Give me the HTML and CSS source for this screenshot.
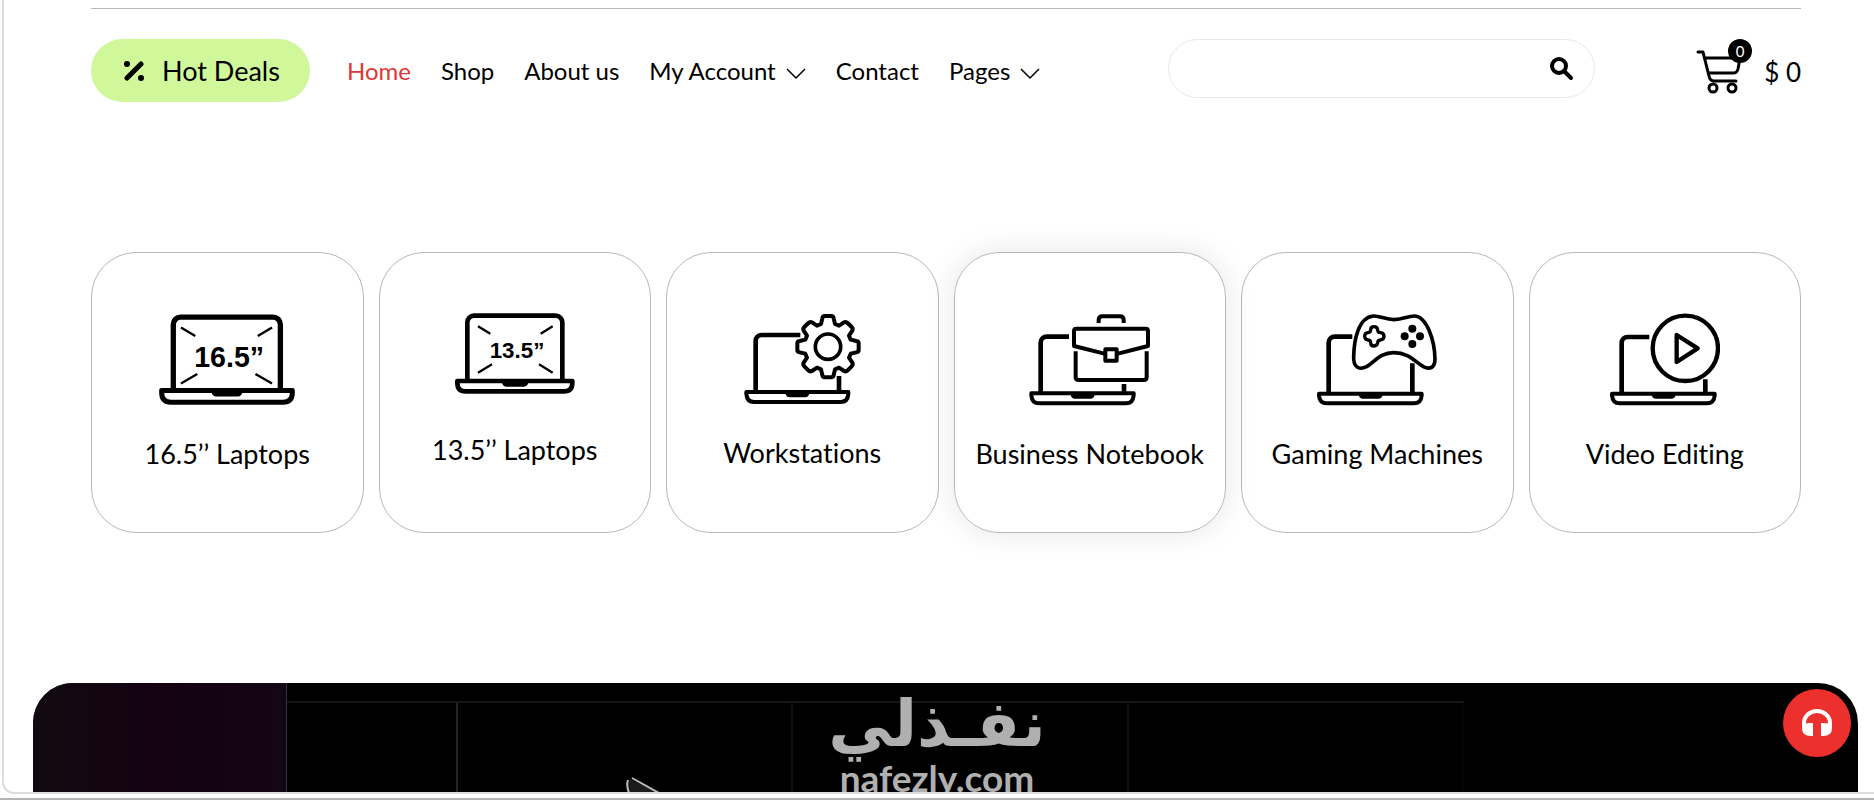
FILE: index.html
```html
<!DOCTYPE html>
<html lang="en">
  <head>
    <meta charset="UTF-8" />
    <meta name="viewport" content="width=device-width, initial-scale=1.0" />
    <title>Laptop Store</title>
    <link rel="stylesheet" href="styles.css">
  </head>
  <body>
    <div class="frame">
      <header class="header">
        <a class="hot_deals" href="#">
          <svg width="20" height="20" viewBox="0 0 20 20">
            <path d="M3 17L17 3" stroke="currentColor" stroke-width="5" stroke-linecap="round" />
            <circle cx="3" cy="3" r="3" />
            <circle cx="17" cy="17" r="3" />
          </svg>
          Hot Deals
        </a>
        <nav>
          <ul class="menu">
            <li><a class="active" href="#">Home</a></li>
            <li><a href="#">Shop</a></li>
            <li><a href="#">About us</a></li>
            <li>
              <a href="#">My Account
                <svg width="20" height="12" viewBox="0 0 20 12"><path class="chevron" d="M1 1L10 10L19 1" /></svg>
              </a>
            </li>
            <li><a href="#">Contact</a></li>
            <li>
              <a href="#">Pages
                <svg width="20" height="12" viewBox="0 0 20 12"><path class="chevron" d="M1 1L10 10L19 1" /></svg>
              </a>
            </li>
          </ul>
        </nav>
        <form class="search">
          <input type="search" name="q" aria-label="Search" />
          <button type="submit" aria-label="Search">
            <svg width="26" height="26" viewBox="0 0 26 26">
              <circle cx="10" cy="10" r="7" fill="none" stroke="currentColor" stroke-width="4" />
              <path d="M15 15L22 22" stroke="currentColor" stroke-width="4" stroke-linecap="round" />
            </svg>
          </button>
        </form>
        <a class="cart" href="#">
          <span class="cart_icon">
            <svg width="46" height="46" viewBox="0 0 46 46">
              <g fill="none" stroke="currentColor" stroke-width="3" stroke-linecap="round" stroke-linejoin="round">
                <path d="M2 3H7L13 27Q14 32 18 32H40" />
                <path d="M9 9H44L42 20Q41 24 38 24H13" />
                <circle cx="17" cy="39" r="4" />
                <circle cx="36" cy="39" r="4" />
              </g>
            </svg>
            <span class="badge">0</span>
          </span>
          <span>$ 0</span>
        </a>
      </header>

      <main>
        <section class="categories">
          <a class="card" href="#">
            <svg width="136" height="95" viewBox="237 219 409 285">
              <path class="line" stroke-width="16" d="M280 450V253a22 22 0 0 1 22-22H580a22 22 0 0 1 22 22V450" />
              <path class="line" stroke-width="15" d="M245 452H638V458Q638 487 610 487H273Q245 487 245 458Z" />
              <path d="M395 455H488Q486 470 474 470H409Q397 470 395 455Z" />
              <path class="line" stroke-width="7" d="M303 262L346 288M577 262L534 288M303 431L352 402M577 431L527 402" />
              <text x="448" y="381" font-size="86">16.5”</text>
            </svg>
            16.5’’ Laptops
          </a>
          <a class="card" href="#">
            <svg width="120" height="91" viewBox="254 219 360 273">
              <path class="line" stroke-width="14" d="M291 420V247a20 20 0 0 1 20-20H556a20 20 0 0 1 20 20V420" />
              <path class="line" stroke-width="14" d="M261 423H606V428Q606 454 581 454H286Q261 454 261 428Z" />
              <path d="M395 427H474Q472 440 460 440H407Q397 440 395 427Z" />
              <path class="line" stroke-width="7" d="M323 259L360 281M547 259L511 281M323 398L365 373M547 398L506 373" />
              <text x="440" y="354" font-size="67">13.5”</text>
            </svg>
            13.5’’ Laptops
          </a>
          <a class="card" href="#">
            <svg width="117" height="94" viewBox="251 219 351 282">
              <path class="line" stroke-width="14" d="M286 455V303a18 18 0 0 1 18-18H420M536 408V455" />
              <path class="line" stroke-width="12" d="M258 456H564V462Q562 486 541 486H281Q260 486 258 462Z" />
              <path d="M375 460H447Q445 472 434 472H388Q377 472 375 460Z" />
              <g transform="translate(503 320)">
                <path class="line" stroke-width="12" d="M-21-68L-17-85Q-16-92-10-92H10Q16-92 17-85L21-68L33-63L48-73Q54-76 59-71L71-59Q76-54 73-48L63-33L68-21L85-17Q92-16 92-10V10Q92 16 85 17L68 21L63 33L73 48Q76 54 71 59L59 71Q54 76 48 73L33 63L21 68L17 85Q16 92 10 92H-10Q-16 92-17 85L-21 68L-33 63L-48 73Q-54 76-59 71L-71 59Q-76 54-73 48L-63 33L-68 21L-85 17Q-92 16-92 10V-10Q-92-16-85-17L-68-21L-63-33L-73-48Q-76-54-71-59L-59-71Q-54-76-48-73L-33-63Z" />
                <circle class="line" stroke-width="11" r="38" />
              </g>
            </svg>
            Workstations
          </a>
          <a class="card raised" href="#">
            <svg width="121" height="95" viewBox="266 279 363 285">
              <path class="line" stroke-width="14" d="M301 518V368a18 18 0 0 1 18-18H386M551 492V518" />
              <path class="line" stroke-width="12" d="M273 520H580V526Q578 550 557 550H296Q275 550 273 526Z" />
              <path d="M391 524H463Q461 536 450 536H404Q393 536 391 524Z" />
              <path class="line" stroke-width="12" d="M475 309V300q0-11 11-11H539q11 0 11 11V309" />
              <path class="line" stroke-width="12" d="M492 401L401 378V333q0-7 7-7H616q7 0 7 7V378L533 401" />
              <path class="line" stroke-width="12" d="M406 394V472q0 8 8 8H611q8 0 8-8V394" />
              <rect class="line" stroke-width="12" x="495" y="388" width="34" height="34" />
            </svg>
            Business Notebook
          </a>
          <a class="card" href="#">
            <svg width="120" height="95" viewBox="261 219 360 285">
              <path class="line" stroke-width="14" d="M296 460V308a18 18 0 0 1 18-18H367M547 370V460" />
              <path class="line" stroke-width="12" d="M267 461H575V467Q573 490 552 490H290Q269 490 267 467Z" />
              <path d="M386 465H458Q456 476 445 476H399Q388 476 386 465Z" />
              <path class="line" stroke-width="11" d="M430 228C450 227 465 239 492 239C520 239 535 227 555 228C590 231 614 300 615 358C614 385 598 389 580 380C555 365 535 338 492 338C450 338 435 365 410 380C385 392 370 380 371 350C372 300 385 232 430 228Z" />
              <path class="line" stroke-width="10" d="M422 270Q422 260 432 260T443 270Q444 278 451 278Q462 279 462 289T451 300Q444 300 443 308Q442 318 432 318T422 308Q421 300 414 300Q404 299 404 289T414 278Q421 278 422 270Z" />
              <circle cx="547" cy="266" r="12" />
              <circle cx="524" cy="289" r="12" />
              <circle cx="570" cy="289" r="12" />
              <circle cx="547" cy="312" r="12" />
            </svg>
            Gaming Machines
          </a>
          <a class="card" href="#">
            <svg width="110" height="95" viewBox="298 219 330 285">
              <path class="line" stroke-width="14" d="M333 460V309a18 18 0 0 1 18-18H416M584 418V460" />
              <path class="line" stroke-width="12" d="M304 461H612V467Q610 490 589 490H327Q306 490 304 467Z" />
              <path d="M423 465H495Q493 476 482 476H436Q425 476 423 465Z" />
              <circle class="line" stroke-width="13" cx="524" cy="325" r="98" />
              <path class="line" stroke-width="13" d="M498 285L561 325L498 366Z" />
            </svg>
            Video Editing
          </a>
        </section>

        <section class="banner">
          <div class="banner_side"></div>
          <div class="banner_grid">
            <div></div>
            <div>
              <svg class="banner_shape" width="36" height="16" viewBox="0 0 36 16">
                <path d="M2 16Q0 6 3 2L34 16Z" fill="#1c1c1c" />
                <path d="M3 16Q0 8 2 3M6 1L33 16" fill="none" stroke="#bbb" stroke-width="2" />
              </svg>
            </div>
            <div></div>
            <div></div>
          </div>
          <div class="watermark">
            <span class="watermark_ar" lang="ar" dir="rtl">نفـذلي</span>
            <span class="watermark_en">nafezly.com</span>
          </div>
        </section>
      </main>

      <button class="support" type="button" aria-label="Support">
        <svg width="30" height="28" viewBox="0 0 30 28">
          <path d="M2 19V14a13 12 0 0 1 26 0V19" fill="none" stroke="currentColor" stroke-width="4" />
          <path d="M11 14V27H9Q0 27 0 19V17Q3 14 8 14ZM19 14V27H21Q30 27 30 19V17Q27 14 22 14Z" fill="currentColor" />
        </svg>
      </button>
    </div>
  </body>
</html>
```
FILE: styles.css
```css
* {
  margin: 0;
  padding: 0;
  box-sizing: border-box;
}
body {
  height: 100vh;
  padding: 0 0 4px 2px;
  border-bottom: 2px solid #b4b3b6;
  background-color: #fdfdfd;
  font-family: Lato, "Liberation Sans", sans-serif;
  font-variant-ligatures: no-common-ligatures;
  color: #000;
  overflow: hidden;
}
a {
  color: inherit;
  text-decoration: none;
}
.frame {
  position: relative;
  height: 100%;
  border-left: 2px solid #dddddf;
  border-bottom: 2px solid #dddddf;
  border-bottom-left-radius: 12px;
  background-color: #fff;
  overflow: hidden;
}

/* header */
.header {
  display: flex;
  align-items: flex-start;
  margin: 8px 73px 0 87px;
  padding-top: 30px;
  border-top: 1px solid #b8b8b8;
}
.hot_deals {
  display: flex;
  align-items: center;
  gap: 18px;
  height: 63px;
  padding: 0 30px 0 33px;
  border-radius: 32px;
  background-color: #d0f79a;
  font-size: 27px;
}
.menu {
  display: flex;
  gap: 30px;
  margin-left: 37px;
  list-style: none;
  font-size: 24px;
  line-height: 64px;
  white-space: nowrap;
}
.menu a {
  display: flex;
  align-items: center;
  gap: 10px;
}
.menu svg {
  margin-top: 6px;
}
.menu .active {
  color: #dc3835;
}
.chevron {
  fill: none;
  stroke: currentColor;
  stroke-width: 1.5;
}
.search {
  display: flex;
  align-items: center;
  width: 25%;
  height: 59px;
  margin-left: auto;
  padding: 0 19px 0 24px;
  border: 1px solid #e8e8e8;
  border-radius: 30px;
}
.search input {
  flex: 1;
  min-width: 0;
  border: 0;
  outline: 0;
  background: none;
  font: inherit;
  font-size: 20px;
}
.search button {
  display: flex;
  border: 0;
  background: none;
  color: #000;
}
.cart {
  display: flex;
  align-items: center;
  gap: 22px;
  height: 66px;
  margin-left: 101px;
  font-size: 26px;
}
.cart_icon {
  position: relative;
  display: flex;
}
.badge {
  position: absolute;
  top: -10px;
  right: -10px;
  width: 24px;
  height: 24px;
  border-radius: 50%;
  background-color: #000;
  color: #fff;
  font-size: 15px;
  line-height: 24px;
  text-align: center;
}

/* categories */
.categories {
  display: grid;
  grid-template-columns: repeat(6, 1fr);
  gap: 15px;
  margin: 147px 73px 150px 87px;
}
.card {
  display: flex;
  flex-direction: column;
  align-items: center;
  gap: 29px;
  padding: 60px 0 61px;
  border: 1px solid #b8b8b8;
  border-radius: 45px;
  font-size: 27px;
  line-height: 34px;
  white-space: nowrap;
}
.raised {
  box-shadow: 0 0 30px rgba(0, 0, 0, 0.1);
}
.card text {
  font-family: "Liberation Sans", sans-serif;
  font-weight: bold;
  text-anchor: middle;
}
.line {
  fill: none;
  stroke: currentColor;
  stroke-linejoin: round;
}

/* banner */
.banner {
  position: relative;
  display: flex;
  height: 600px;
  margin: 0 16px 0 29px;
  border-radius: 40px;
  background-color: #000;
  overflow: hidden;
}
.banner_side {
  flex: 0 0 254px;
  background: linear-gradient(90deg, #120a10, #140212 50%, #140614);
  border-right: 1px solid #333;
}
.banner_grid {
  flex: 0 0 1177px;
  display: grid;
  grid-template-columns: 171px 1fr 1fr 1fr;
  margin-top: 18px;
  border-top: 2px solid #161616;
}
.banner_grid div {
  border-right: 2px solid #101010;
}
.banner_grid div:first-child {
  border-color: #242424;
}
.banner_grid div:last-child {
  border-color: #050505;
}
.banner_shape {
  display: block;
  margin: 74px 0 0 168px;
}
.watermark {
  position: absolute;
  top: 4px;
  left: 0;
  right: 0;
  display: flex;
  flex-direction: column;
  align-items: center;
  padding-right: 17px;
  color: #b0b0b0;
  font-weight: bold;
}
.watermark_ar {
  font-family: "DejaVu Sans", sans-serif;
  font-size: 64px;
  line-height: 75px;
}
.watermark_en {
  font-size: 37px;
  line-height: 32px;
}

/* support button */
.support {
  position: absolute;
  right: 23px;
  bottom: 35px;
  display: flex;
  align-items: center;
  justify-content: center;
  width: 68px;
  height: 68px;
  border: 0;
  border-radius: 50%;
  background-color: #eb302e;
  color: #fff;
}
```
